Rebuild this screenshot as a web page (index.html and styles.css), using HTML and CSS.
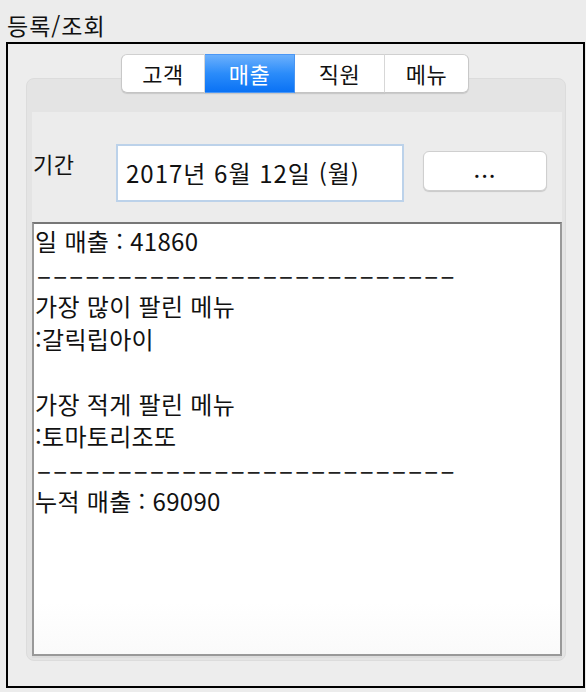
FILE: index.html
```html
<!DOCTYPE html>
<html lang="ko">
  <head>
    <meta charset="UTF-8" />
    <meta name="viewport" content="width=device-width, initial-scale=1.0" />
    <title>등록/조회</title>
    <link rel="stylesheet" href="styles.css">
  </head>
  <body>
    <div class="title">등록/조회</div>
    <div class="frame">
      <div class="tabs">
        <div class="tab first">고객</div>
        <div class="tab on">매출</div>
        <div class="tab">직원</div>
        <div class="tab last">메뉴</div>
      </div>
      <div class="panel">
        <div class="inner">
          <div class="row">
            <div class="label">기간</div>
            <div class="date">2017년 6월 12일 (월)</div>
            <div class="btn">...</div>
          </div>
          <div class="result">
            <p>일 매출 : 41860</p>
            <p class="dash">––––––––––––––––––––––––––</p>
            <p>가장 많이 팔린 메뉴</p>
            <p>:갈릭립아이</p>
            <p>&nbsp;</p>
            <p>가장 적게 팔린 메뉴</p>
            <p>:토마토리조또</p>
            <p class="dash">––––––––––––––––––––––––––</p>
            <p>누적 매출 : 69090</p>
          </div>
        </div>
      </div>
    </div>
  </body>
</html>
```

FILE: styles.css
```css
* {
  padding: 0;
  margin: 0;
  box-sizing: border-box;
}
body {
  background-color: #ececec;
  font-family: "Noto Sans CJK KR", "Noto Sans", sans-serif;
  color: #111;
}
.title {
  font-size: 23px;
  letter-spacing: 1px;
  line-height: 34px;
  padding-left: 7px;
  padding-top: 8px;
}
.frame {
  margin-left: 6px;
  width: 579px;
  height: 646px;
  border: 2px solid #000;
  background-color: #ededed;
}
.tabs {
  position: relative;
  z-index: 1;
  display: flex;
  justify-content: center;
  margin-top: 10px;
  margin-bottom: -15px;
  margin-left: -1px;
}
.tab {
  width: 90px;
  height: 39px;
  line-height: 37px;
  font-size: 22px;
  letter-spacing: 0.5px;
  text-align: center;
  background-color: #fff;
  border-top: 1px solid #d0d0d0;
  border-bottom: 1px solid #c4c4c4;
  border-right: 1px solid #dadada;
  box-shadow: 0 1px 1px rgba(0, 0, 0, 0.12);
}
.tab.first {
  width: 84px;
  border-left: 1px solid #c8c8c8;
  border-radius: 6px 0 0 6px;
}
.tab.last {
  width: 84px;
  border-right: 1px solid #c8c8c8;
  border-radius: 0 6px 6px 0;
}
.tab.on {
  color: #fff;
  border-color: #4b97f5;
  background: linear-gradient(#6cb0fc, #2b8cfa 50%, #0a72f5);
}
.panel {
  margin: 0 17px 0 18px;
  height: 583px;
  background-color: #e4e4e4;
  border: 1px solid #dcdcdc;
  border-radius: 8px;
  padding: 33px 3px 4px 5px;
}
.inner {
  height: 100%;
  background-color: #ececec;
  display: flex;
  flex-direction: column;
}
.row {
  display: flex;
  align-items: flex-start;
  height: 110px;
  padding-top: 32px;
}
.label {
  width: 84px;
  padding-left: 1px;
  padding-top: 4px;
  font-size: 22px;
  letter-spacing: 0.5px;
  line-height: 30px;
}
.date {
  width: 288px;
  height: 58px;
  background-color: #fff;
  border: 2px solid #bcd2ea;
  font-size: 24px;
  letter-spacing: 1px;
  line-height: 54px;
  padding-left: 8px;
}
.btn {
  margin-left: 19px;
  margin-top: 7px;
  width: 124px;
  height: 40px;
  background-color: #fff;
  border: 1px solid #cfcfcf;
  border-radius: 6px;
  box-shadow: 0 1px 1px rgba(0, 0, 0, 0.15);
  text-align: center;
  font-size: 24px;
  letter-spacing: 1px;
  line-height: 32px;
}
.result {
  flex: 1;
  background: linear-gradient(#fff 88%, #fafafa);
  border: 2px solid #999;
  border-top-color: #777;
  box-shadow: 0 2px 0 #dcdcdc;
  padding: 1px 0 0 1px;
  font-size: 24px;
  letter-spacing: 0.3px;
  line-height: 32.5px;
}
.dash {
  font-size: 26px;
  letter-spacing: 2.2px;
  padding-left: 2px;
  color: #222;
}
```
